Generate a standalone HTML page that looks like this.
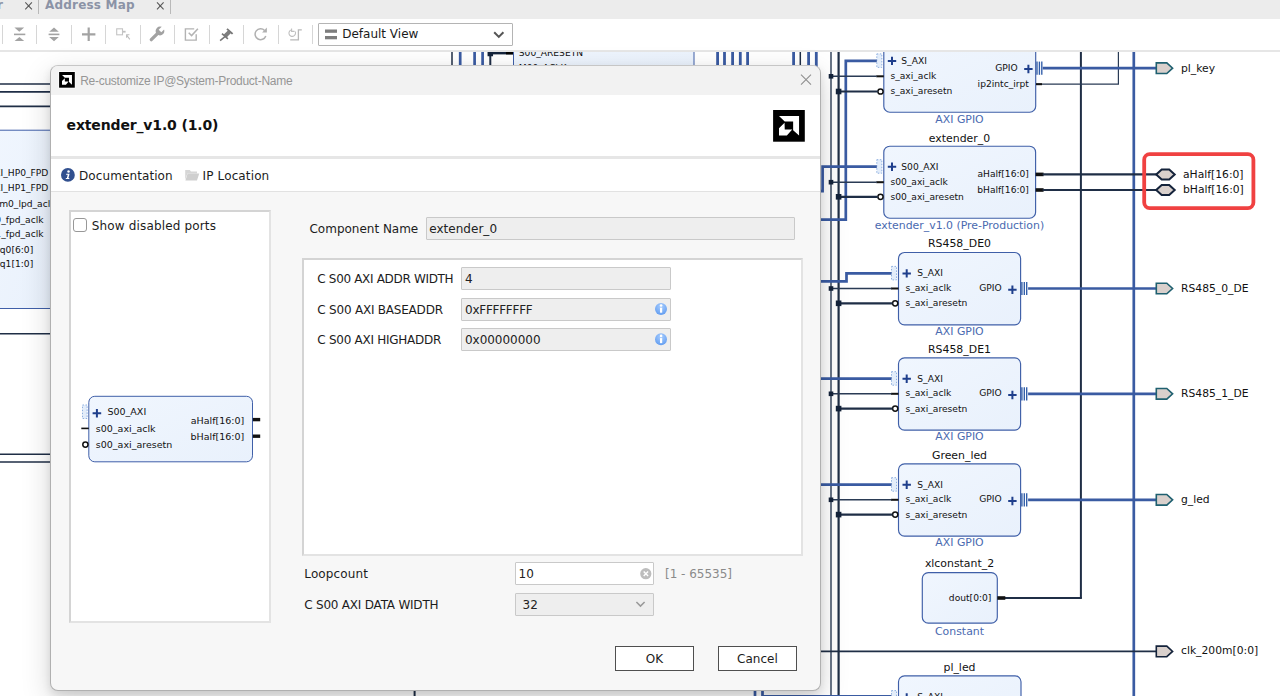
<!DOCTYPE html>
<html lang="en">
<head>
<meta charset="utf-8">
<title>Re-customize IP</title>
<style>
*{box-sizing:border-box;margin:0;padding:0}
html,body{width:1280px;height:696px;overflow:hidden;background:#fff}
body{position:relative;font-family:"DejaVu Sans","Liberation Sans",sans-serif;font-size:12px;color:#1a1a1a}
.abs{position:absolute}
#tabs{left:0;top:0;width:1280px;height:19px;background:#ececec}
#tabs .t{position:absolute;top:-2px;font-weight:700;font-size:12px;color:#8b93a6;white-space:pre;letter-spacing:.2px}
#tabs .sep{position:absolute;top:0;width:1px;height:14px;background:#b9b9b9}
#tabs svg{position:absolute;top:0;left:0}
#toolbar{left:0;top:19px;width:1280px;height:31px;background:#fff}
#tbline{left:0;top:50px;width:1280px;height:2px;background:#e6e6e6}
#toolbar .sep{position:absolute;top:6px;width:1px;height:19px;background:#d6d6d6}
#toolbar svg.ic{position:absolute;left:0;top:0}
#combo{position:absolute;left:318px;top:4px;width:195px;height:23px;border:1px solid #b4b4b4;background:#fff;border-radius:1px}
#combo span{position:absolute;left:23.2px;top:3px;font-size:12px;color:#1a1a1a;white-space:pre}
#canvas{left:0;top:52px;width:1280px;height:644px;overflow:hidden;background:#fff}
#canvas svg{position:absolute;left:0;top:-52px;font-family:"DejaVu Sans",sans-serif}
#dlg{left:50px;top:65px;width:771px;height:626px;background:#f7f7f7;border:1px solid #b0b0b0;border-top-color:#c6c6c6;border-radius:8px;box-shadow:0 10px 30px rgba(0,0,0,.16),0 4px 8px rgba(0,0,0,.10);overflow:hidden}
#dlg .a{position:absolute}
.lbl{position:absolute;white-space:pre;font-size:12px;color:#1c1c1c;line-height:14px}
.sunk{position:absolute;background:#fff;border:2px solid;border-color:#d4d4d4 #e3e3e3 #e3e3e3 #d4d4d4}
.inp{position:absolute;background:#eeeeee;border:1px solid #c9c9c9;border-radius:1px}
.btn{position:absolute;background:#fff;border:1px solid #4f4f4f}
#ttl{font-family:"Liberation Sans",sans-serif;font-size:12px;letter-spacing:-.27px;color:#969696}
#hd{font-weight:700;font-size:14px;color:#111;letter-spacing:-.15px;line-height:17px}
</style>
</head>
<body>
<!-- tab strip -->
<div id="tabs" class="abs">
  <span class="t" style="left:-3px">r</span>
  <span class="t" style="left:45px">Address Map</span>
  <div class="sep" style="left:38px"></div>
  <div class="sep" style="left:170px"></div>
  <svg width="200" height="19"><path d="M25.3,2.3l6.6,7M31.9,2.3l-6.6,7M157,2.3l6.6,7M163.6,2.3l-6.6,7" stroke="#5a5a5a" stroke-width="1.1" fill="none"/></svg>
</div>
<!-- toolbar -->
<div id="toolbar" class="abs">
  <div class="sep" style="left:2px"></div><div class="sep" style="left:36px"></div><div class="sep" style="left:71px"></div>
  <div class="sep" style="left:105px"></div><div class="sep" style="left:140px"></div><div class="sep" style="left:174px"></div>
  <div class="sep" style="left:209px"></div><div class="sep" style="left:243px"></div><div class="sep" style="left:278px"></div>
  <div class="sep" style="left:312px"></div>
  <svg class="ic" width="320" height="31">
    <path d="M14.4,8.6h9.8l-4.9,4.1zM14.6,22.1h9.6l-4.8,-4.1z" fill="#a3a3a3"/><rect x="14" y="14.6" width="11.3" height="1.6" fill="#a3a3a3"/>
<path d="M49.2,12.8h9.6l-4.8,-4.3zM49.2,18h9.6l-4.8,4.2z" fill="#a3a3a3"/><rect x="48.6" y="14.6" width="10.8" height="1.6" fill="#a3a3a3"/>
<path d="M82,15.3h13.4M88.7,8.6v13.4" stroke="#a3a3a3" stroke-width="2.2" fill="none"/>
<rect x="116.7" y="9.8" width="5.8" height="6" fill="none" stroke="#c4c4c4" stroke-width="1.1"/><rect x="123" y="11.8" width="2.6" height="1.8" fill="#c0c0c0"/><path d="M126.2,15.8h3.2M126.6,15.6v3.2M126.8,16.2l3,4.2" stroke="#bdbdbd" stroke-width="1.1" fill="none"/>
<path d="M151.3,20.7l7.4,-7.4" stroke="#a2a2a2" stroke-width="3.3" stroke-linecap="round" fill="none"/><circle cx="160" cy="12" r="4.4" fill="#a2a2a2"/><polygon points="161.3,13.3 158.7,10.7 163.2,6.2 165.8,8.8" fill="#fff"/>
<path d="M194.2,9.9h-8.8v11.2h10.8v-5.8" fill="none" stroke="#b3b3b3" stroke-width="1.4"/><path d="M188.7,13.8l2.9,2.8l6.3,-6.9" fill="none" stroke="#b3b3b3" stroke-width="1.5"/>
<path d="M227,9.9l5.6,5" stroke="#757575" stroke-width="1.9" fill="none"/><path d="M229.6,12.6l-4.4,4.4" stroke="#7d7d7d" stroke-width="4" fill="none"/><path d="M222,14.6l5.9,5.3" stroke="#757575" stroke-width="1.6" fill="none"/><path d="M225,17.6l-4.9,4" stroke="#757575" stroke-width="1.5" fill="none"/>
<path d="M264.6,11.4a5.5,5.5 0 1 0 1.2,5.6" fill="none" stroke="#b0b0b0" stroke-width="1.5"/><path d="M266.9,8.6v4.8h-4.8z" fill="#b0b0b0"/>
<path d="M295.2,12.6a3.3,3.3 0 1 1 -3.2,-1.8" fill="none" stroke="#c0c0c0" stroke-width="1.1"/><path d="M291.6,9.4v3h3" fill="none" stroke="#c0c0c0" stroke-width="1.1"/><path d="M301.8,10.8h-3.4v10h-8.2" fill="none" stroke="#b8b8b8" stroke-width="1.3"/>
  </svg>
  <div id="combo">
    <svg width="192" height="21" style="position:absolute;left:0;top:0"><rect x="6" y="5.5" width="12" height="3.3" fill="#7d7d7d"/><rect x="6" y="12" width="12" height="3.3" fill="#7d7d7d"/><path d="M175.2,8.2l4.6,4.7l4.6,-4.7" stroke="#555" stroke-width="2" fill="none"/></svg>
    <span>Default View</span>
  </div>
</div>
<div id="tbline" class="abs"></div>
<!-- block design canvas -->
<div id="canvas" class="abs">
<svg width="1280" height="696" viewBox="0 0 1280 696">
<defs><linearGradient id="bg" x1="0" y1="0" x2="1" y2="1"><stop offset="0" stop-color="#f0f6fe"/><stop offset="1" stop-color="#e9f1fc"/></linearGradient></defs>
<line x1="460.2" y1="52" x2="460.2" y2="70" stroke="#3a5ba2" stroke-width="2.7" />
<line x1="474.6" y1="52" x2="474.6" y2="70" stroke="#3a5ba2" stroke-width="2.7" />
<line x1="482.6" y1="52" x2="482.6" y2="70" stroke="#3a5ba2" stroke-width="2.7" />
<line x1="452" y1="52" x2="452" y2="70" stroke="#1f2e46" stroke-width="1.5" />
<line x1="490.3" y1="53" x2="490.3" y2="70" stroke="#1f2e46" stroke-width="2" />
<rect x="487.55" y="50.75" width="5.5" height="5.5" fill="#14233b" stroke="none" stroke-width="1" rx="0"/>
<line x1="488" y1="53.0" x2="513" y2="53.0" stroke="#14233b" stroke-width="2.8" />
<line x1="506" y1="53.0" x2="513.5" y2="53.0" stroke="#000" stroke-width="2.8" />
<line x1="717.6" y1="52" x2="717.6" y2="70" stroke="#3a5ba2" stroke-width="2.8" />
<line x1="724.5" y1="52" x2="724.5" y2="70" stroke="#3a5ba2" stroke-width="2.8" />
<line x1="732.6" y1="52" x2="732.6" y2="70" stroke="#3a5ba2" stroke-width="2.8" />
<line x1="740.3" y1="52" x2="740.3" y2="70" stroke="#3a5ba2" stroke-width="2.8" />
<line x1="747.6" y1="52" x2="747.6" y2="70" stroke="#3a5ba2" stroke-width="2.8" />
<line x1="793.6" y1="52" x2="793.6" y2="70" stroke="#3a5ba2" stroke-width="2.8" />
<line x1="808.6" y1="52" x2="808.6" y2="70" stroke="#3a5ba2" stroke-width="2.8" />
<line x1="816.3" y1="52" x2="816.3" y2="70" stroke="#3a5ba2" stroke-width="2.8" />
<line x1="800.3" y1="52" x2="800.3" y2="70" stroke="#1f2e46" stroke-width="1.5" />
<line x1="0" y1="84" x2="60" y2="84" stroke="#1f2e46" stroke-width="1.6" />
<line x1="0" y1="91.8" x2="60" y2="91.8" stroke="#1f2e46" stroke-width="1.8" />
<line x1="0" y1="106.3" x2="60" y2="106.3" stroke="#1f2e46" stroke-width="1.8" />
<line x1="0" y1="333.8" x2="60" y2="333.8" stroke="#1f2e46" stroke-width="1.6" />
<line x1="0" y1="454.3" x2="60" y2="454.3" stroke="#1f2e46" stroke-width="1.6" />
<line x1="0" y1="462" x2="60" y2="462" stroke="#1f2e46" stroke-width="1.6" />
<line x1="414.6" y1="640" x2="414.6" y2="696" stroke="#1f2e46" stroke-width="2" />
<line x1="755" y1="640" x2="755" y2="696" stroke="#3a5ba2" stroke-width="2.7" />
<line x1="831.0" y1="52" x2="831.0" y2="696" stroke="#2a3b55" stroke-width="1.4" />
<line x1="838.6" y1="52" x2="838.6" y2="696" stroke="#1f2e46" stroke-width="2.2" />
<line x1="1080.9" y1="52" x2="1080.9" y2="598" stroke="#1f2e46" stroke-width="2" />
<line x1="1133.8" y1="52" x2="1133.8" y2="696" stroke="#3a5ba2" stroke-width="2.7" />
<polyline points="1036,84.2 1118.4,84.2 1118.4,52" fill="none" stroke="#2a3b55" stroke-width="1.2" stroke-linejoin="miter"/>
<line x1="815" y1="651.4" x2="1156" y2="651.4" stroke="#1f2e46" stroke-width="1.8" />
<line x1="1003" y1="598" x2="1081.9" y2="598" stroke="#1f2e46" stroke-width="1.8" />
<rect x="883.8" y="40.0" width="151.9000000000001" height="72.2" fill="url(#bg)" stroke="#3f5fa8" stroke-width="1.15" rx="6"/>
<text x="959.5" y="122.5" font-size="10.9" fill="#4a6ab0" text-anchor="middle" letter-spacing="0" font-weight="400">AXI GPIO</text>
<rect x="876.8" y="53.9" width="5" height="13.5" fill="#e3edfa" stroke="#8fb0e0" stroke-width="1" stroke-dasharray="1.5,1.5"/>
<path d="M887.8,60.9H896.2M892.0,56.699999999999996V65.1" stroke="#1f3f8c" stroke-width="2" fill="none"/>
<text x="901.3" y="64.0" font-size="9.15" fill="#111" text-anchor="start" letter-spacing="0" font-weight="400">S_AXI</text>
<line x1="876.3" y1="76.3" x2="883.8" y2="76.3" stroke="#111" stroke-width="2" />
<text x="890.4" y="78.7" font-size="9.15" fill="#111" text-anchor="start" letter-spacing="0" font-weight="400">s_axi_aclk</text>
<circle cx="880.5" cy="91.5" r="2.6" fill="#fff" stroke="#111" stroke-width="1.5"/>
<text x="890.4" y="93.7" font-size="9.15" fill="#111" text-anchor="start" letter-spacing="0" font-weight="400">s_axi_aresetn</text>
<text x="1017.6" y="71.0" font-size="9.15" fill="#111" text-anchor="end" letter-spacing="0" font-weight="400">GPIO</text>
<path d="M1024.2,69.0H1032.6000000000001M1028.4,64.8V73.2" stroke="#1f3f8c" stroke-width="2" fill="none"/>
<text x="1028.9" y="86.5" font-size="9.15" fill="#111" text-anchor="end" letter-spacing="0" font-weight="400">ip2intc_irpt</text>
<line x1="1037.0" y1="61.6" x2="1037.0" y2="74.8" stroke="#2f5ca8" stroke-width="1.35" />
<line x1="1039.4" y1="61.6" x2="1039.4" y2="74.8" stroke="#2f5ca8" stroke-width="1.35" />
<line x1="1041.8" y1="61.6" x2="1041.8" y2="74.8" stroke="#2f5ca8" stroke-width="1.35" />
<line x1="1036" y1="84.2" x2="1042" y2="84.2" stroke="#111" stroke-width="2" />
<polyline points="876.8,60.9 845.8,60.9 845.8,219.7 815,219.7" fill="none" stroke="#3a5ba2" stroke-width="2.7" stroke-linejoin="miter"/>
<line x1="831.0" y1="76.3" x2="876.8" y2="76.3" stroke="#2a3b55" stroke-width="1.4" />
<rect x="828.7" y="74.0" width="4.6" height="4.6" fill="#14233b" stroke="none" stroke-width="1" rx="0"/>
<line x1="838.6" y1="91.5" x2="877.8" y2="91.5" stroke="#1f2e46" stroke-width="2.2" />
<rect x="835.8000000000001" y="88.7" width="5.6" height="5.6" fill="#14233b" stroke="none" stroke-width="1" rx="0"/>
<line x1="1042.7" y1="68.2" x2="1156" y2="68.2" stroke="#3a5ba2" stroke-width="2.7" />
<path d="M1156.3,62.900000000000006H1166.8L1172.6,68.2L1166.8,73.5H1156.3Z" fill="#d9d0cc" stroke="#1f6070" stroke-width="1.6" stroke-linejoin="miter"/>
<text x="1181" y="72.0" font-size="10.75" fill="#111" text-anchor="start" letter-spacing="0" font-weight="400">pl_key</text>
<text x="959.5" y="141.6" font-size="10.9" fill="#111" text-anchor="middle" letter-spacing="0" font-weight="400">extender_0</text>
<rect x="883.8" y="146.2" width="151.79999999999995" height="72.0" fill="url(#bg)" stroke="#3f5fa8" stroke-width="1.15" rx="6"/>
<text x="959.5" y="229.0" font-size="10.9" fill="#4a6ab0" text-anchor="middle" letter-spacing="0" font-weight="400">extender_v1.0 (Pre-Production)</text>
<rect x="876.8" y="159.7" width="5" height="13.5" fill="#e3edfa" stroke="#8fb0e0" stroke-width="1" stroke-dasharray="1.5,1.5"/>
<path d="M887.8,166.7H896.2M892.0,162.5V170.89999999999998" stroke="#1f3f8c" stroke-width="2" fill="none"/>
<text x="901.3" y="170.1" font-size="9.15" fill="#111" text-anchor="start" letter-spacing="0" font-weight="400">S00_AXI</text>
<line x1="876.3" y1="182.2" x2="883.8" y2="182.2" stroke="#111" stroke-width="2" />
<text x="890.4" y="184.79999999999998" font-size="9.15" fill="#111" text-anchor="start" letter-spacing="0" font-weight="400">s00_axi_aclk</text>
<circle cx="880.5" cy="196.8" r="2.6" fill="#fff" stroke="#111" stroke-width="1.5"/>
<text x="890.4" y="199.60000000000002" font-size="9.15" fill="#111" text-anchor="start" letter-spacing="0" font-weight="400">s00_axi_aresetn</text>
<text x="1028.9" y="176.9" font-size="9.15" fill="#111" text-anchor="end" letter-spacing="0" font-weight="400">aHalf[16:0]</text>
<text x="1028.9" y="192.5" font-size="9.15" fill="#111" text-anchor="end" letter-spacing="0" font-weight="400">bHalf[16:0]</text>
<line x1="1035.6" y1="174.4" x2="1043.6" y2="174.4" stroke="#111" stroke-width="3.6" />
<line x1="1035.6" y1="190.0" x2="1043.6" y2="190.0" stroke="#111" stroke-width="3.6" />
<polyline points="876.8,166.7 822.6,166.7 822.6,191.2 815,191.2" fill="none" stroke="#3a5ba2" stroke-width="2.7" stroke-linejoin="miter"/>
<line x1="831.0" y1="182.2" x2="876.8" y2="182.2" stroke="#2a3b55" stroke-width="1.4" />
<rect x="828.7" y="179.89999999999998" width="4.6" height="4.6" fill="#14233b" stroke="none" stroke-width="1" rx="0"/>
<line x1="838.6" y1="196.8" x2="877.8" y2="196.8" stroke="#1f2e46" stroke-width="2.2" />
<rect x="835.8000000000001" y="194.0" width="5.6" height="5.6" fill="#14233b" stroke="none" stroke-width="1" rx="0"/>
<line x1="1042.6" y1="174.4" x2="1158" y2="174.4" stroke="#1f2e46" stroke-width="2.1" />
<line x1="1042.6" y1="190.0" x2="1158" y2="190.0" stroke="#1f2e46" stroke-width="2.1" />
<path d="M1156.2,174.4L1161.7,169.4H1169.2L1174.7,174.4L1169.2,179.4H1161.7Z" fill="#d9d0cc" stroke="#14233b" stroke-width="2" stroke-linejoin="miter"/>
<path d="M1156.2,190.0L1161.7,185.0H1169.2L1174.7,190.0L1169.2,195.0H1161.7Z" fill="#d9d0cc" stroke="#14233b" stroke-width="2" stroke-linejoin="miter"/>
<text x="1183" y="177.9" font-size="10.75" fill="#111" text-anchor="start" letter-spacing="0" font-weight="400">aHalf[16:0]</text>
<text x="1183" y="193.4" font-size="10.75" fill="#111" text-anchor="start" letter-spacing="0" font-weight="400">bHalf[16:0]</text>
<rect x="1144.2" y="154.2" width="109.2" height="53.9" fill="none" stroke="#f04141" stroke-width="3.8" rx="5.5"/>
<text x="959.5" y="247.3" font-size="10.9" fill="#111" text-anchor="middle" letter-spacing="0" font-weight="400">RS458_DE0</text>
<rect x="898.5" y="252.5" width="122.10000000000002" height="72.30000000000001" fill="url(#bg)" stroke="#3f5fa8" stroke-width="1.15" rx="6"/>
<text x="959.5" y="335.0" font-size="10.9" fill="#4a6ab0" text-anchor="middle" letter-spacing="0" font-weight="400">AXI GPIO</text>
<rect x="891.5" y="266.4" width="5" height="13.5" fill="#e3edfa" stroke="#8fb0e0" stroke-width="1" stroke-dasharray="1.5,1.5"/>
<path d="M902.5,273.4H910.9000000000001M906.7,269.2V277.59999999999997" stroke="#1f3f8c" stroke-width="2" fill="none"/>
<text x="917.3" y="276.4" font-size="9.15" fill="#111" text-anchor="start" letter-spacing="0" font-weight="400">S_AXI</text>
<line x1="891.0" y1="288.5" x2="898.5" y2="288.5" stroke="#111" stroke-width="2" />
<text x="905.4" y="291.1" font-size="9.15" fill="#111" text-anchor="start" letter-spacing="0" font-weight="400">s_axi_aclk</text>
<circle cx="895.2" cy="303.3" r="2.6" fill="#fff" stroke="#111" stroke-width="1.5"/>
<text x="905.4" y="306.2" font-size="9.15" fill="#111" text-anchor="start" letter-spacing="0" font-weight="400">s_axi_aresetn</text>
<text x="1001.7" y="291.1" font-size="9.15" fill="#111" text-anchor="end" letter-spacing="0" font-weight="400">GPIO</text>
<path d="M1008.1999999999999,289.7H1016.6M1012.4,285.5V293.9" stroke="#1f3f8c" stroke-width="2" fill="none"/>
<line x1="1021.9" y1="281.9" x2="1021.9" y2="295.1" stroke="#2f5ca8" stroke-width="1.35" />
<line x1="1024.3" y1="281.9" x2="1024.3" y2="295.1" stroke="#2f5ca8" stroke-width="1.35" />
<line x1="1026.7" y1="281.9" x2="1026.7" y2="295.1" stroke="#2f5ca8" stroke-width="1.35" />
<polyline points="891.5,273.4 846.5,273.4 846.5,281.4 815,281.4" fill="none" stroke="#3a5ba2" stroke-width="2.7" stroke-linejoin="miter"/>
<line x1="831.0" y1="288.5" x2="891.5" y2="288.5" stroke="#2a3b55" stroke-width="1.4" />
<rect x="828.7" y="286.2" width="4.6" height="4.6" fill="#14233b" stroke="none" stroke-width="1" rx="0"/>
<line x1="838.6" y1="303.3" x2="892.5" y2="303.3" stroke="#1f2e46" stroke-width="2.2" />
<rect x="835.8000000000001" y="300.5" width="5.6" height="5.6" fill="#14233b" stroke="none" stroke-width="1" rx="0"/>
<line x1="1028.1" y1="288.5" x2="1156" y2="288.5" stroke="#3a5ba2" stroke-width="2.7" />
<path d="M1156.3,283.2H1166.8L1172.6,288.5L1166.8,293.8H1156.3Z" fill="#d9d0cc" stroke="#1f6070" stroke-width="1.6" stroke-linejoin="miter"/>
<text x="1181" y="291.8" font-size="10.75" fill="#111" text-anchor="start" letter-spacing="0" font-weight="400">RS485_0_DE</text>
<text x="959.5" y="352.6" font-size="10.9" fill="#111" text-anchor="middle" letter-spacing="0" font-weight="400">RS458_DE1</text>
<rect x="898.5" y="357.8" width="122.10000000000002" height="72.30000000000001" fill="url(#bg)" stroke="#3f5fa8" stroke-width="1.15" rx="6"/>
<text x="959.5" y="440.3" font-size="10.9" fill="#4a6ab0" text-anchor="middle" letter-spacing="0" font-weight="400">AXI GPIO</text>
<rect x="891.5" y="371.7" width="5" height="13.5" fill="#e3edfa" stroke="#8fb0e0" stroke-width="1" stroke-dasharray="1.5,1.5"/>
<path d="M902.5,378.7H910.9000000000001M906.7,374.5V382.9" stroke="#1f3f8c" stroke-width="2" fill="none"/>
<text x="917.3" y="381.7" font-size="9.15" fill="#111" text-anchor="start" letter-spacing="0" font-weight="400">S_AXI</text>
<line x1="891.0" y1="393.8" x2="898.5" y2="393.8" stroke="#111" stroke-width="2" />
<text x="905.4" y="396.40000000000003" font-size="9.15" fill="#111" text-anchor="start" letter-spacing="0" font-weight="400">s_axi_aclk</text>
<circle cx="895.2" cy="408.6" r="2.6" fill="#fff" stroke="#111" stroke-width="1.5"/>
<text x="905.4" y="411.5" font-size="9.15" fill="#111" text-anchor="start" letter-spacing="0" font-weight="400">s_axi_aresetn</text>
<text x="1001.7" y="396.40000000000003" font-size="9.15" fill="#111" text-anchor="end" letter-spacing="0" font-weight="400">GPIO</text>
<path d="M1008.1999999999999,395.0H1016.6M1012.4,390.8V399.2" stroke="#1f3f8c" stroke-width="2" fill="none"/>
<line x1="1021.9" y1="387.2" x2="1021.9" y2="400.40000000000003" stroke="#2f5ca8" stroke-width="1.35" />
<line x1="1024.3" y1="387.2" x2="1024.3" y2="400.40000000000003" stroke="#2f5ca8" stroke-width="1.35" />
<line x1="1026.7" y1="387.2" x2="1026.7" y2="400.40000000000003" stroke="#2f5ca8" stroke-width="1.35" />
<line x1="815" y1="378.7" x2="891.5" y2="378.7" stroke="#3a5ba2" stroke-width="2.7" />
<line x1="831.0" y1="393.8" x2="891.5" y2="393.8" stroke="#2a3b55" stroke-width="1.4" />
<rect x="828.7" y="391.5" width="4.6" height="4.6" fill="#14233b" stroke="none" stroke-width="1" rx="0"/>
<line x1="838.6" y1="408.6" x2="892.5" y2="408.6" stroke="#1f2e46" stroke-width="2.2" />
<rect x="835.8000000000001" y="405.8" width="5.6" height="5.6" fill="#14233b" stroke="none" stroke-width="1" rx="0"/>
<line x1="1028.1" y1="393.8" x2="1156" y2="393.8" stroke="#3a5ba2" stroke-width="2.7" />
<path d="M1156.3,388.5H1166.8L1172.6,393.8L1166.8,399.1H1156.3Z" fill="#d9d0cc" stroke="#1f6070" stroke-width="1.6" stroke-linejoin="miter"/>
<text x="1181" y="397.1" font-size="10.75" fill="#111" text-anchor="start" letter-spacing="0" font-weight="400">RS485_1_DE</text>
<text x="959.5" y="458.6" font-size="10.9" fill="#111" text-anchor="middle" letter-spacing="0" font-weight="400">Green_led</text>
<rect x="898.5" y="463.8" width="122.10000000000002" height="72.30000000000001" fill="url(#bg)" stroke="#3f5fa8" stroke-width="1.15" rx="6"/>
<text x="959.5" y="546.3000000000001" font-size="10.9" fill="#4a6ab0" text-anchor="middle" letter-spacing="0" font-weight="400">AXI GPIO</text>
<rect x="891.5" y="477.7" width="5" height="13.5" fill="#e3edfa" stroke="#8fb0e0" stroke-width="1" stroke-dasharray="1.5,1.5"/>
<path d="M902.5,484.7H910.9000000000001M906.7,480.5V488.9" stroke="#1f3f8c" stroke-width="2" fill="none"/>
<text x="917.3" y="487.7" font-size="9.15" fill="#111" text-anchor="start" letter-spacing="0" font-weight="400">S_AXI</text>
<line x1="891.0" y1="499.8" x2="898.5" y2="499.8" stroke="#111" stroke-width="2" />
<text x="905.4" y="502.40000000000003" font-size="9.15" fill="#111" text-anchor="start" letter-spacing="0" font-weight="400">s_axi_aclk</text>
<circle cx="895.2" cy="514.6" r="2.6" fill="#fff" stroke="#111" stroke-width="1.5"/>
<text x="905.4" y="517.5" font-size="9.15" fill="#111" text-anchor="start" letter-spacing="0" font-weight="400">s_axi_aresetn</text>
<text x="1001.7" y="502.40000000000003" font-size="9.15" fill="#111" text-anchor="end" letter-spacing="0" font-weight="400">GPIO</text>
<path d="M1008.1999999999999,501.0H1016.6M1012.4,496.8V505.2" stroke="#1f3f8c" stroke-width="2" fill="none"/>
<line x1="1021.9" y1="493.2" x2="1021.9" y2="506.40000000000003" stroke="#2f5ca8" stroke-width="1.35" />
<line x1="1024.3" y1="493.2" x2="1024.3" y2="506.40000000000003" stroke="#2f5ca8" stroke-width="1.35" />
<line x1="1026.7" y1="493.2" x2="1026.7" y2="506.40000000000003" stroke="#2f5ca8" stroke-width="1.35" />
<line x1="815" y1="484.7" x2="891.5" y2="484.7" stroke="#3a5ba2" stroke-width="2.7" />
<line x1="831.0" y1="499.8" x2="891.5" y2="499.8" stroke="#2a3b55" stroke-width="1.4" />
<rect x="828.7" y="497.5" width="4.6" height="4.6" fill="#14233b" stroke="none" stroke-width="1" rx="0"/>
<line x1="838.6" y1="514.6" x2="892.5" y2="514.6" stroke="#1f2e46" stroke-width="2.2" />
<rect x="835.8000000000001" y="511.8" width="5.6" height="5.6" fill="#14233b" stroke="none" stroke-width="1" rx="0"/>
<line x1="1028.1" y1="499.8" x2="1156" y2="499.8" stroke="#3a5ba2" stroke-width="2.7" />
<path d="M1156.3,494.5H1166.8L1172.6,499.8L1166.8,505.1H1156.3Z" fill="#d9d0cc" stroke="#1f6070" stroke-width="1.6" stroke-linejoin="miter"/>
<text x="1181" y="503.1" font-size="10.75" fill="#111" text-anchor="start" letter-spacing="0" font-weight="400">g_led</text>
<text x="959.5" y="566.9" font-size="10.9" fill="#111" text-anchor="middle" letter-spacing="0" font-weight="400">xlconstant_2</text>
<rect x="922.3" y="572.6" width="75.0" height="50.60000000000002" fill="url(#bg)" stroke="#3f5fa8" stroke-width="1.15" rx="6"/>
<text x="991.4" y="600.7" font-size="9.15" fill="#111" text-anchor="end" letter-spacing="0" font-weight="400">dout[0:0]</text>
<line x1="997.3" y1="598" x2="1005.3" y2="598" stroke="#111" stroke-width="3.6" />
<text x="959.5" y="634.5" font-size="10.9" fill="#4a6ab0" text-anchor="middle" letter-spacing="0" font-weight="400">Constant</text>
<path d="M1156.3,646.1H1166.8L1172.6,651.4L1166.8,656.6999999999999H1156.3Z" fill="#d9d0cc" stroke="#14233b" stroke-width="1.6" stroke-linejoin="miter"/>
<text x="1181" y="654.3" font-size="10.75" fill="#111" text-anchor="start" letter-spacing="0" font-weight="400">clk_200m[0:0]</text>
<text x="959.5" y="671.0" font-size="10.9" fill="#111" text-anchor="middle" letter-spacing="0" font-weight="400">pl_led</text>
<rect x="898.5" y="675.8" width="122.5" height="72.20000000000005" fill="url(#bg)" stroke="#3f5fa8" stroke-width="1.15" rx="6"/>
<rect x="891.5" y="690.6" width="5" height="13.5" fill="#e3edfa" stroke="#8fb0e0" stroke-width="1" stroke-dasharray="1.5,1.5"/>
<path d="M902.5,697.5H910.9000000000001M906.7,693.3V701.7" stroke="#1f3f8c" stroke-width="2" fill="none"/>
<text x="917.3" y="700.2" font-size="9.15" fill="#111" text-anchor="start" letter-spacing="0" font-weight="400">S_AXI</text>
<polyline points="762.5,640 762.5,696.3 891.5,696.3" fill="none" stroke="#3a5ba2" stroke-width="2.7" stroke-linejoin="miter"/>
<rect x="-10" y="130.2" width="70" height="178.3" fill="url(#bg)" stroke="#3f5fa8" stroke-width="1"/>
<text x="48.3" y="176.4" font-size="9.15" fill="#111" text-anchor="end" letter-spacing="0" font-weight="400">S_AXI_HP0_FPD</text>
<text x="48.3" y="191.4" font-size="9.15" fill="#111" text-anchor="end" letter-spacing="0" font-weight="400">S_AXI_HP1_FPD</text>
<text x="55.5" y="207.4" font-size="9.15" fill="#111" text-anchor="end" letter-spacing="0" font-weight="400">maxihpm0_lpd_aclk</text>
<text x="43.5" y="222.5" font-size="9.15" fill="#111" text-anchor="end" letter-spacing="0" font-weight="400">maxihpm0_fpd_aclk</text>
<text x="43.5" y="237.3" font-size="9.15" fill="#111" text-anchor="end" letter-spacing="0" font-weight="400">maxihpm1_fpd_aclk</text>
<text x="33.2" y="252.5" font-size="9.15" fill="#111" text-anchor="end" letter-spacing="0" font-weight="400">pl_ps_irq0[6:0]</text>
<text x="33.2" y="267.2" font-size="9.15" fill="#111" text-anchor="end" letter-spacing="0" font-weight="400">pl_ps_irq1[1:0]</text>
<rect x="513.5" y="40" width="180.5" height="40" fill="url(#bg)" stroke="#3f5fa8" stroke-width="1" rx="0"/>
<text x="518.8" y="56.0" font-size="9.15" fill="#111" text-anchor="start" letter-spacing="0" font-weight="400">S00_ARESETN</text>
<text x="518.8" y="71.0" font-size="9.15" fill="#111" text-anchor="start" letter-spacing="0" font-weight="400">M00_ACLK</text>
</svg>
</div>
<!-- dialog -->
<div id="dlg" class="abs">
<div class="a" style="left:0.0px;top:0.0px;width:769px;height:29px;background:#f2f2f2"></div>
<svg class="a" width="24" height="22" viewBox="56 69 24 22" style="left:5.0px;top:3.0px;"><rect x="58.4" y="71.3" width="17.099999999999998" height="17.099999999999998" fill="#fff"/><rect x="59.1" y="72.0" width="15.7" height="15.7" fill="#000"/><polygon points="62.01,74.94 71.96,74.94 71.96,84.64 69.02,81.97 69.02,77.7 64.88,77.7" fill="#fff"/><polygon points="62.01,81.08 64.78,78.32 64.88,81.6 68.58,81.6 65.91,84.64 62.01,84.64" fill="#fff"/></svg>
<span class="lbl" id="ttl" style="left:29.2px;top:7.84px;">Re-customize IP@System-Product-Name</span>
<svg class="a" width="20" height="20" viewBox="796 70 20 20" style="left:745.0px;top:4.0px;"><path d="M801,74.7l10,10M811,74.7l-10,10" stroke="#909090" stroke-width="1.1" fill="none"/></svg>
<div class="a" style="left:0.0px;top:29.0px;width:769px;height:61px;background:#fff"></div>
<span class="lbl" id="hd" style="left:15.6px;top:50.66px;">extender_v1.0 (1.0)</span>
<svg class="a" width="36" height="36" viewBox="772 109 36 36" style="left:721.0px;top:43.0px;"><rect x="773.1" y="110.0" width="31.7" height="31.7" fill="#000"/><polygon points="778.98,115.93 799.07,115.93 799.07,135.52 793.14,130.14 793.14,121.51 784.76,121.51" fill="#fff"/><polygon points="778.98,128.34 784.56,122.76 784.76,129.39 792.24,129.39 786.86,135.52 778.98,135.52" fill="#fff"/></svg>
<div class="a" style="left:0.0px;top:90.0px;width:769px;height:3px;background:#e6e6e6"></div>
<div class="a" style="left:0.0px;top:93.0px;width:769px;height:32px;background:#fff"></div>
<div class="a" style="left:0.0px;top:125.0px;width:769px;height:1px;background:#e2e2e2"></div>
<svg class="a" width="150" height="22" viewBox="58 164 150 22" style="left:7.0px;top:98.0px;"><circle cx="67.9" cy="174.9" r="6.9" fill="#31508f"/><circle cx="68.5" cy="171.5" r="1.25" fill="#fff"/><path d="M66.3,173.8h3.3l-1.15,4.3h0.95l-0.2,0.9h-3.5l0.2,-0.9h0.95l0.9,-3.4h-1.7z" fill="#fff"/><path d="M185.2,170h4.6l1.2,1.4h6v2h-9.6l-2.2,6.4z" fill="#d6d6d6"/><path d="M187.6,173.6h11.6l-2.2,6.8h-11.6z" fill="#cfcfcf"/></svg>
<span class="lbl"  style="left:28.0px;top:102.85px;letter-spacing:0.095px;">Documentation</span>
<span class="lbl"  style="left:151.6px;top:102.85px;letter-spacing:0.128px;">IP Location</span>
<div class="sunk" style="left:18.0px;top:144.0px;width:202px;height:413px;"></div>
<div class="a" style="left:22.0px;top:152.0px;width:14px;height:14px;border:1.2px solid #989898;border-radius:3px;background:#fff"></div>
<span class="lbl"  style="left:40.8px;top:153.35px;letter-spacing:0.151px;">Show disabled ports</span>
<svg class="a" width="198" height="409" viewBox="71 212 198 409" style="left:20.0px;top:146.0px;font-family:'DejaVu Sans',sans-serif"><defs><linearGradient id="bg2" x1="0" y1="0" x2="1" y2="1"><stop offset="0" stop-color="#f0f6fe"/><stop offset="1" stop-color="#e9f1fc"/></linearGradient></defs>
<rect x="88.8" y="396.3" width="163.7" height="65.5" rx="6" fill="url(#bg2)" stroke="#3f5fa8" stroke-width="1"/>
<rect x="82.5" y="405.0" width="4.6" height="13.5" fill="#e3edfa" stroke="#8fb0e0" stroke-dasharray="1.5,1.5"/>
<path d="M92.6,413.2h8.6M96.9,408.9v8.6" stroke="#1f3f8c" stroke-width="2" fill="none"/>
<text x="107.5" y="415.2" font-size="9.5" fill="#111" text-anchor="start">S00_AXI</text>
<text x="95.8" y="431.6" font-size="9.5" fill="#111" text-anchor="start">s00_axi_aclk</text>
<text x="95.8" y="448.0" font-size="9.5" fill="#111" text-anchor="start">s00_axi_aresetn</text>
<text x="244.3" y="423.7" font-size="9.5" fill="#111" text-anchor="end">aHalf[16:0]</text>
<text x="244.3" y="439.5" font-size="9.5" fill="#111" text-anchor="end">bHalf[16:0]</text>
<line x1="81.3" y1="428.4" x2="88.8" y2="428.4" stroke="#111" stroke-width="1.6"/>
<circle cx="85.4" cy="444.6" r="2.6" fill="#fff" stroke="#111" stroke-width="1.5"/>
<line x1="252.8" y1="419.6" x2="260.2" y2="419.6" stroke="#111" stroke-width="3.4"/>
<line x1="252.8" y1="436.2" x2="260.2" y2="436.2" stroke="#111" stroke-width="3.4"/></svg>
<span class="lbl"  style="left:258.5px;top:155.85px;letter-spacing:-0.01px;">Component Name</span>
<div class="inp" style="left:375.0px;top:151.0px;width:369px;height:23px;"></div>
<span class="lbl"  style="left:378.3px;top:155.85px;letter-spacing:0.02px;color:#222;">extender_0</span>
<div class="sunk" style="left:251.0px;top:192.0px;width:501px;height:297.5px;"></div>
<span class="lbl"  style="left:266.3px;top:205.85px;letter-spacing:-0.327px;">C S00 AXI ADDR WIDTH</span>
<div class="inp" style="left:410.0px;top:201.0px;width:210px;height:23px;"></div>
<span class="lbl"  style="left:414.0px;top:205.85px;color:#222;">4</span>
<span class="lbl"  style="left:266.3px;top:236.85px;letter-spacing:-0.214px;">C S00 AXI BASEADDR</span>
<div class="inp" style="left:410.0px;top:231.6px;width:210px;height:23.0px;"></div>
<span class="lbl"  style="left:414.0px;top:236.85px;letter-spacing:-0.247px;color:#222;">0xFFFFFFFF</span>
<span class="lbl"  style="left:266.3px;top:266.85px;letter-spacing:-0.269px;">C S00 AXI HIGHADDR</span>
<div class="inp" style="left:410.0px;top:262.0px;width:210px;height:23px;"></div>
<span class="lbl"  style="left:414.0px;top:266.85px;letter-spacing:-0.033px;color:#222;">0x00000000</span>
<svg class="a" width="18" height="48" viewBox="652 300 18 48" style="left:601.0px;top:234.0px;"><defs><radialGradient id="ig" cx=".5" cy=".3" r=".8"><stop offset="0" stop-color="#a9ceff"/><stop offset="1" stop-color="#5896ee"/></radialGradient></defs><circle cx="661" cy="308.9" r="6" fill="url(#ig)"/><rect x="660" y="307.7" width="2.2" height="5" fill="#fff"/><circle cx="661.1" cy="305.5" r="1.3" fill="#fff"/><circle cx="661" cy="339.3" r="6" fill="url(#ig)"/><rect x="660" y="338.1" width="2.2" height="5" fill="#fff"/><circle cx="661.1" cy="335.90000000000003" r="1.3" fill="#fff"/></svg>
<span class="lbl"  style="left:253.3px;top:500.85px;letter-spacing:0.123px;">Loopcount</span>
<div class="inp" style="left:464.0px;top:496.0px;width:139px;height:23px;background:#fff"></div>
<span class="lbl"  style="left:467.6px;top:500.85px;color:#222;">10</span>
<svg class="a" width="16" height="16" viewBox="638 566 16 16" style="left:587.0px;top:500.0px;"><circle cx="645.8" cy="573.7" r="5.6" fill="#bdbdbd"/><path d="M643.7,571.5l4.4,4.4M648.1,571.5l-4.4,4.4" stroke="#fff" stroke-width="1.4"/></svg>
<span class="lbl"  style="left:614.0px;top:500.85px;letter-spacing:-0.013px;color:#8a8a8a;">[1 - 65535]</span>
<span class="lbl"  style="left:253.3px;top:531.85px;letter-spacing:-0.22px;">C S00 AXI DATA WIDTH</span>
<div class="inp" style="left:464.0px;top:527.0px;width:139px;height:23px;"></div>
<span class="lbl"  style="left:471.5px;top:531.85px;color:#222;">32</span>
<svg class="a" width="18" height="14" viewBox="632 598 18 14" style="left:581.0px;top:532.0px;"><path d="M636.4,602l4.1,4.1l4.1,-4.1" stroke="#999" stroke-width="1.5" fill="none"/></svg>
<div class="btn" style="left:564.0px;top:579.5px;width:79px;height:25.0px;"></div>
<div class="btn" style="left:667.0px;top:579.5px;width:79px;height:25.0px;"></div>
<span class="lbl"  style="left:603.4px;top:585.85px;transform:translateX(-50%);">OK</span>
<span class="lbl"  style="left:706.4px;top:585.85px;transform:translateX(-50%);">Cancel</span>
</div>
</body>
</html>
